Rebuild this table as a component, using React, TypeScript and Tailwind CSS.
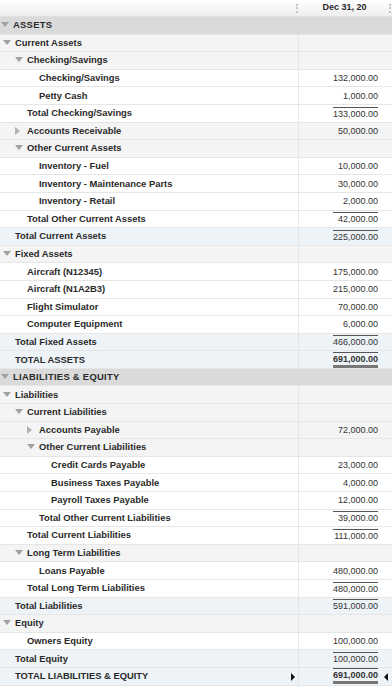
import React from 'react';

type Kind = 'section' | 'group' | 'leaf' | 'subtotal' | 'total' | 'grand';

interface Row {
    label: string;
    depth: number;
    kind: Kind;
    amount?: string;
    open?: boolean;
    lineAbove?: boolean;
    selected?: boolean;
}

// Balance sheet rows, top to bottom
const ROWS: Row[] = [
    { label: 'ASSETS', depth: 0, kind: 'section', open: true },
    { label: 'Current Assets', depth: 0, kind: 'group', open: true },
    { label: 'Checking/Savings', depth: 1, kind: 'group', open: true },
    { label: 'Checking/Savings', depth: 2, kind: 'leaf', amount: '132,000.00' },
    { label: 'Petty Cash', depth: 2, kind: 'leaf', amount: '1,000.00' },
    { label: 'Total Checking/Savings', depth: 1, kind: 'subtotal', amount: '133,000.00', lineAbove: true },
    { label: 'Accounts Receivable', depth: 1, kind: 'group', open: false, amount: '50,000.00' },
    { label: 'Other Current Assets', depth: 1, kind: 'group', open: true },
    { label: 'Inventory - Fuel', depth: 2, kind: 'leaf', amount: '10,000.00' },
    { label: 'Inventory - Maintenance Parts', depth: 2, kind: 'leaf', amount: '30,000.00' },
    { label: 'Inventory - Retail', depth: 2, kind: 'leaf', amount: '2,000.00' },
    { label: 'Total Other Current Assets', depth: 1, kind: 'subtotal', amount: '42,000.00', lineAbove: true },
    { label: 'Total Current Assets', depth: 0, kind: 'total', amount: '225,000.00', lineAbove: true },
    { label: 'Fixed Assets', depth: 0, kind: 'group', open: true },
    { label: 'Aircraft (N12345)', depth: 1, kind: 'leaf', amount: '175,000.00' },
    { label: 'Aircraft (N1A2B3)', depth: 1, kind: 'leaf', amount: '215,000.00' },
    { label: 'Flight Simulator', depth: 1, kind: 'leaf', amount: '70,000.00' },
    { label: 'Computer Equipment', depth: 1, kind: 'leaf', amount: '6,000.00' },
    { label: 'Total Fixed Assets', depth: 0, kind: 'total', amount: '466,000.00', lineAbove: true },
    { label: 'TOTAL ASSETS', depth: 0, kind: 'grand', amount: '691,000.00', lineAbove: true },
    { label: 'LIABILITIES & EQUITY', depth: 0, kind: 'section', open: true },
    { label: 'Liabilities', depth: 0, kind: 'group', open: true },
    { label: 'Current Liabilities', depth: 1, kind: 'group', open: true },
    { label: 'Accounts Payable', depth: 2, kind: 'group', open: false, amount: '72,000.00' },
    { label: 'Other Current Liabilities', depth: 2, kind: 'group', open: true },
    { label: 'Credit Cards Payable', depth: 3, kind: 'leaf', amount: '23,000.00' },
    { label: 'Business Taxes Payable', depth: 3, kind: 'leaf', amount: '4,000.00' },
    { label: 'Payroll Taxes Payable', depth: 3, kind: 'leaf', amount: '12,000.00' },
    { label: 'Total Other Current Liabilities', depth: 2, kind: 'subtotal', amount: '39,000.00', lineAbove: true },
    { label: 'Total Current Liabilities', depth: 1, kind: 'subtotal', amount: '111,000.00', lineAbove: true },
    { label: 'Long Term Liabilities', depth: 1, kind: 'group', open: true },
    { label: 'Loans Payable', depth: 2, kind: 'leaf', amount: '480,000.00' },
    { label: 'Total Long Term Liabilities', depth: 1, kind: 'subtotal', amount: '480,000.00', lineAbove: true },
    { label: 'Total Liabilities', depth: 0, kind: 'total', amount: '591,000.00', lineAbove: true },
    { label: 'Equity', depth: 0, kind: 'group', open: true },
    { label: 'Owners Equity', depth: 1, kind: 'leaf', amount: '100,000.00' },
    { label: 'Total Equity', depth: 0, kind: 'total', amount: '100,000.00', lineAbove: true },
    { label: 'TOTAL LIABILITIES & EQUITY', depth: 0, kind: 'grand', amount: '691,000.00', lineAbove: true, selected: true },
];

const PAD = ['pl-[15px]', 'pl-[27px]', 'pl-[39px]', 'pl-[51px]'];

const BG: Record<Kind, string> = {
    section: 'bg-[#dadada]',
    group: 'bg-[#f4f4f4]',
    leaf: 'bg-white',
    subtotal: 'bg-white',
    total: 'bg-[#eef3f8]',
    grand: 'bg-[#eef3f8]',
};

function Caret({ open }: { open: boolean }) {
    return open ? (
        <svg width="8" height="5" viewBox="0 0 8 5" className="absolute left-[-12px] top-[4px]">
            <path d="M0 0 L8 0 L4 5 Z" fill="#a0a0a0" />
        </svg>
    ) : (
        <svg width="5" height="8" viewBox="0 0 5 8" className="absolute left-[-12px] top-[3px]">
            <path d="M0 0 L5 4 L0 8 Z" fill="#b3b3b3" />
        </svg>
    );
}

function ReportRow({ row }: { row: Row }) {
    const isSection = row.kind === 'section';
    const hasCaret = row.kind === 'section' || row.kind === 'group';
    const pad = isSection ? 'pl-[13px]' : PAD[row.depth];

    return (
        <div className={`flex h-[17.6px] border-b border-[#e6e6e6] ${BG[row.kind]}`}>
            <div className={`relative flex-1 flex items-center ${pad}`}>
                <span
                    className={`relative text-[9.4px] font-bold text-[#2a2a2a] whitespace-nowrap ${isSection ? 'tracking-[0.3px]' : ''}`}
                >
                    {hasCaret && <Caret open={!!row.open} />}
                    {row.label}
                </span>
                {row.selected && (
                    <svg width="4" height="8" viewBox="0 0 4 8" className="absolute right-[3px] top-[5px]">
                        <path d="M0 0 L4 4 L0 8 Z" fill="#111" />
                    </svg>
                )}
            </div>
            <div
                className={`relative w-[94px] flex items-center justify-end pr-[14px] ${isSection ? '' : 'border-l border-[#e6e6e6]'}`}
            >
                {row.amount && (
                    <span
                        className={`w-[45px] text-right text-[9px] leading-[12px] text-[#333] ${row.lineAbove ? 'border-t border-[#555]' : ''} ${row.kind === 'grand' ? 'font-bold border-b-[3px] border-b-[#777]' : ''}`}
                    >
                        {row.amount}
                    </span>
                )}
                {row.selected && (
                    <svg width="4" height="8" viewBox="0 0 4 8" className="absolute right-[4px] top-[5px]">
                        <path d="M4 0 L0 4 L4 8 Z" fill="#111" />
                    </svg>
                )}
            </div>
        </div>
    );
}

export default function App() {
    return (
        <div className="w-[392px] h-[689px] overflow-hidden bg-white font-['Liberation_Sans',Arial,sans-serif]">
            {/* Column header */}
            <div className="flex h-[17px] bg-gradient-to-b from-white to-[#eeeeee] border-b border-[#e0e0e0]">
                <div className="flex-1 flex items-center justify-end">
                    <span className="h-[9px] border-r-2 border-dotted border-[#c4c4c4]" />
                </div>
                <div className="w-[94px] flex items-center">
                    <span className="flex-1 text-center text-[9px] font-bold text-[#2a2a2a] pl-[2px]">Dec 31, 20</span>
                    <span className="h-[9px] mr-[1px] border-r-2 border-dotted border-[#c4c4c4]" />
                </div>
            </div>

            {ROWS.map((row, i) => (
                <ReportRow key={i} row={row} />
            ))}
        </div>
    );
}
